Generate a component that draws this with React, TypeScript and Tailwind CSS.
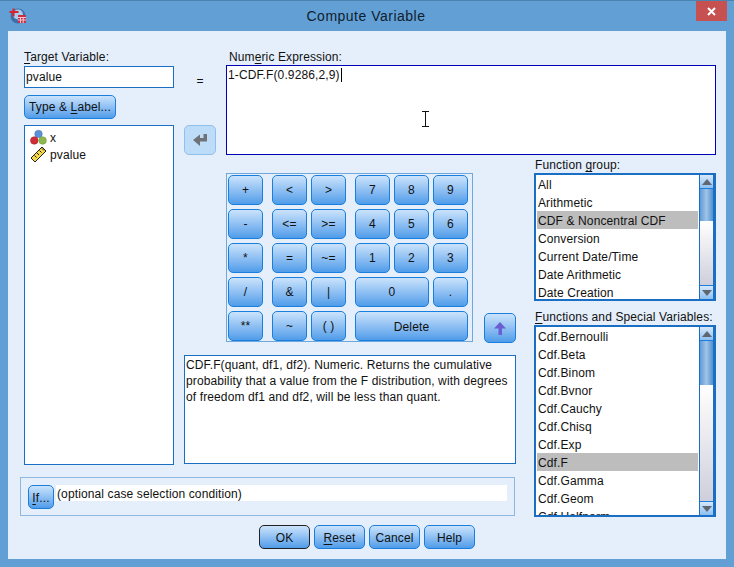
import React from "react";

const btn =
  "flex items-center justify-center rounded-[5px] border border-[#1a7fdc] bg-gradient-to-b from-[#cbe3fb] to-[#4f9ce9] text-[12px] text-[#111]";

function U({ children }: { children: React.ReactNode }) {
  return <span className="underline underline-offset-2">{children}</span>;
}

function Logo() {
  return (
    <svg width="18" height="18" viewBox="0 0 18 18" className="shrink-0">
      <circle cx="9" cy="9" r="7.5" fill="#3f6fa8" />
      <circle cx="9" cy="7.5" r="5" fill="#a9cdea" />
      <path d="M0.5 5h9M4.5 1.5v8" stroke="#d8232f" strokeWidth="2" fill="none" />
      <rect x="9" y="8" width="8" height="8" fill="#c8304a" />
      <path d="M9 10.5h8M9 13h8M11.5 10.5V16M14.2 10.5V16" stroke="#f5c8d0" strokeWidth="1" fill="none" />
    </svg>
  );
}

function NominalIcon() {
  return (
    <svg width="17" height="17" viewBox="0 0 17 17" className="shrink-0">
      <circle cx="8.5" cy="5" r="3.8" fill="#5c8fd6" stroke="#4a78b8" strokeWidth="0.5" />
      <circle cx="4.3" cy="11.5" r="3.8" fill="#d02c38" stroke="#a01c28" strokeWidth="0.5" />
      <circle cx="12.6" cy="11.5" r="3.8" fill="#8cb84c" stroke="#6c9438" strokeWidth="0.5" />
    </svg>
  );
}

function RulerIcon() {
  return (
    <svg width="17" height="17" viewBox="0 0 17 17" className="shrink-0">
      <path d="M1 12 L12 1 L16 5 L5 16 Z" fill="#f4d84a" stroke="#222" strokeWidth="1" />
      <path d="M4.5 9.5l2 2M7 7l2 2M9.5 4.5l2 2M12 2.5l2 2" stroke="#222" strokeWidth="1" fill="none" />
    </svg>
  );
}

function ListRow({ label, selected }: { label: string; selected?: boolean }) {
  return (
    <div className={`h-[18px] shrink-0 pl-[1px] leading-[20px] whitespace-nowrap ${selected ? "bg-[#bdbdbd]" : ""}`}>
      {label}
    </div>
  );
}

function Triangle({ up }: { up?: boolean }) {
  return (
    <svg width="10" height="6" viewBox="0 0 10 6">
      <path d={up ? "M0 6 L5 0 L10 6 Z" : "M0 0 L10 0 L5 6 Z"} fill="#5f6670" />
    </svg>
  );
}

function ScrollBar({ thumb }: { thumb: number }) {
  return (
    <div className="flex w-[15px] shrink-0 flex-col border-x border-[#1a6fc4]">
      <div className="flex h-[14px] shrink-0 items-center justify-center border-b border-[#1a7fdc] bg-gradient-to-b from-[#d6e8fb] to-[#8cc0f2]">
        <Triangle up />
      </div>
      <div
        className="shrink-0 bg-gradient-to-r from-[#5f9bd6] via-[#9fc4e6] to-[#4f8fd0]"
        style={{ height: thumb }}
      />
      <div className="flex-1 bg-gradient-to-b from-[#ffffff] to-[#cfcfdc]" />
      <div className="flex h-[14px] shrink-0 items-center justify-center border-t border-[#1a7fdc] bg-gradient-to-b from-[#d6e8fb] to-[#8cc0f2]">
        <Triangle />
      </div>
    </div>
  );
}

function ListBox({ items, selected, height, thumb }: { items: string[]; selected: string; height: string; thumb: number }) {
  return (
    <div className={`flex justify-between overflow-hidden border-2 border-[#1a6fc4] bg-white pl-[1px] ${height}`}>
      <div className="flex w-[161px] flex-col overflow-hidden">
        {items.map((i) => (
          <ListRow key={i} label={i} selected={i === selected} />
        ))}
      </div>
      <ScrollBar thumb={thumb} />
    </div>
  );
}

const keys: { label: string; cls: string }[] = [
  { label: "+", cls: "col-start-1" },
  { label: "<", cls: "col-start-3" },
  { label: ">", cls: "col-start-5" },
  { label: "7", cls: "col-start-7" },
  { label: "8", cls: "col-start-9" },
  { label: "9", cls: "col-start-11" },
  { label: "-", cls: "col-start-1" },
  { label: "<=", cls: "col-start-3" },
  { label: ">=", cls: "col-start-5" },
  { label: "4", cls: "col-start-7" },
  { label: "5", cls: "col-start-9" },
  { label: "6", cls: "col-start-11" },
  { label: "*", cls: "col-start-1" },
  { label: "=", cls: "col-start-3" },
  { label: "~=", cls: "col-start-5" },
  { label: "1", cls: "col-start-7" },
  { label: "2", cls: "col-start-9" },
  { label: "3", cls: "col-start-11" },
  { label: "/", cls: "col-start-1" },
  { label: "&", cls: "col-start-3" },
  { label: "|", cls: "col-start-5" },
  { label: "0", cls: "col-start-7 col-span-3" },
  { label: ".", cls: "col-start-11" },
  { label: "**", cls: "col-start-1" },
  { label: "~", cls: "col-start-3" },
  { label: "( )", cls: "col-start-5" },
  { label: "Delete", cls: "col-start-7 col-span-5 pt-[1px]" },
];

const groups = ["All", "Arithmetic", "CDF & Noncentral CDF", "Conversion", "Current Date/Time", "Date Arithmetic", "Date Creation"];
const funcs = ["Cdf.Bernoulli", "Cdf.Beta", "Cdf.Binom", "Cdf.Bvnor", "Cdf.Cauchy", "Cdf.Chisq", "Cdf.Exp", "Cdf.F", "Cdf.Gamma", "Cdf.Geom", "Cdf.Halfnorm"];

export default function App() {
  return (
    <div className="flex h-[567px] w-[734px] flex-col overflow-hidden border-t border-[#4a83ad] bg-[#619fd4] font-['Liberation_Sans',Arial,sans-serif] text-[12px] text-[#111]">
      {/* title bar */}
      <div className="relative flex h-[30px] shrink-0 items-center pl-[9px]">
        <Logo />
        <div className="flex-1 pr-[29px] text-center text-[14px] tracking-[0.5px] text-[#10202e]">Compute Variable</div>
        <div className="absolute right-[7px] top-0 flex h-[20px] w-[31px] items-center justify-center bg-[#c75050]">
          <svg width="9" height="9" viewBox="0 0 9 9">
            <path d="M1 1l7 7M8 1l-7 7" stroke="#fff" strokeWidth="2" />
          </svg>
        </div>
      </div>

      {/* body */}
      <div className="mx-2 flex h-[528px] flex-col bg-[#e4effb] pl-3 pt-[19px] tracking-[0.12px]">
        <div className="grid grid-cols-[4px_150px_10px_32px_10px_290px_18px_182px] grid-rows-[75px_30px_310px_12px_40px]">
          {/* target */}
          <div className="col-start-2 row-start-1 flex flex-col">
            <div className="h-[16px] leading-[14px]">
              <U>T</U>arget Variable:
            </div>
            <div className="flex h-[22px] items-center border border-[#1a6fc4] bg-white pl-[1px]">pvalue</div>
            <div className={`${btn} mt-[7px] h-[24px] w-[92px]`}>
              Type &amp;&nbsp;<U>L</U>abel...
            </div>
          </div>

          <div className="col-start-4 row-start-1 mt-[22px] text-center leading-[18px]">=</div>

          {/* expression */}
          <div className="col-start-6 col-end-9 row-start-1 row-end-3 flex flex-col">
            <div className="h-[15px] pl-[3px] leading-[14px]">
              Num<U>e</U>ric Expression:
            </div>
            <div className="relative h-[90px] border border-[#0000b4] bg-white pl-[1px] leading-[18px]">
              <span className="border-r border-black pr-[1px]">1-CDF.F(0.9286,2,9)</span>
              <svg width="9" height="17" viewBox="0 0 9 17" className="absolute left-[194px] top-[45px]">
                <path d="M1 .5h7M1 15.5h7M4.5 .5v15" stroke="#111" strokeWidth="1" fill="none" />
              </svg>
            </div>
          </div>

          {/* variables */}
          <div className="col-start-2 row-start-2 row-end-4 border border-[#1a6fc4] bg-white pl-[5px] pt-[3px]">
            <div className="flex h-[17px] items-center gap-[1px]">
              <NominalIcon />
              <span className="pl-[2px]">x</span>
            </div>
            <div className="flex h-[17px] items-center gap-[1px]">
              <RulerIcon />
              <span className="pl-[2px]">pvalue</span>
            </div>
          </div>

          <div className="col-start-4 row-start-2 flex items-center justify-center rounded-[5px] border border-[#8fc0ee] bg-[#bddcf8]">
            <svg width="16" height="14" viewBox="0 0 16 14">
              <path d="M15 1v7.5H8V13L1 7l7-5.5V5h3.5V1z" fill="#6f7378" />
            </svg>
          </div>

          {/* keypad + description */}
          <div className="col-start-4 col-end-7 row-start-3 flex flex-col">
            <div className="mt-[18px] flex items-end justify-between">
              <div className="ml-[42px] grid grid-cols-[35px_9px_35px_4px_35px_9px_35px_4px_35px_4px_35px] gap-y-[4px] border border-[#6ea8dc] pl-[1px] pr-[4px] pt-[1px]">
                {keys.map((k) => (
                  <div key={k.label} className={`${btn} h-[30px] ${k.cls}`}>
                    {k.label}
                  </div>
                ))}
              </div>
              <div className={`${btn} h-[30px] w-[32px] translate-y-[1px]`}>
                <svg width="12" height="13" viewBox="0 0 12 13">
                  <path d="M6 0l6 6.5H8V13H4.5V6.5H0z" fill="#6a5fd0" />
                </svg>
              </div>
            </div>
            <div className="mt-[13px] h-[109px] border border-[#1a6fc4] bg-white px-[1px] pt-[1px] leading-[16px]">
              CDF.F(quant, df1, df2). Numeric. Returns the cumulative probability that a value from the F distribution, with degrees of freedom df1 and df2, will be less than quant.
            </div>
          </div>

          {/* right column */}
          <div className="col-start-8 row-start-3 row-end-6 flex flex-col">
            <div className="h-[18px] pl-[1px] pt-[3px] leading-[14px]">
              Function <U>g</U>roup:
            </div>
            <ListBox items={groups} selected="CDF & Noncentral CDF" height="h-[128px]" thumb={32} />
            <div className="h-[24px] pl-[1px] pt-[9px] leading-[14px] whitespace-nowrap">
              <U>F</U>unctions and Special Variables:
            </div>
            <ListBox items={funcs} selected="Cdf.F" height="h-[192px]" thumb={44} />
          </div>

          {/* if row */}
          <div className="col-start-1 col-end-7 row-start-5 mr-[1px] mb-[1px] flex items-start gap-[2px] border border-[#8fb8e0] px-[7px] pt-[7px]">
            <div className={`${btn} h-[24px] w-[26px] shrink-0 pt-[2px]`}>
              <U>I</U>f...
            </div>
            <div className="h-[16px] flex-1 bg-white pl-[1px] leading-[18px]">(optional case selection condition)</div>
          </div>
        </div>

        {/* footer */}
        <div className="mt-[8px] flex justify-center gap-[4px] pr-3">
          <div className={`${btn} h-[24px] w-[51px] !border-[#222] pt-[1px]`}>OK</div>
          <div className={`${btn} h-[24px] w-[51px] pt-[1px]`}>
            <U>R</U>eset
          </div>
          <div className={`${btn} h-[24px] w-[51px] pt-[1px]`}>Cancel</div>
          <div className={`${btn} h-[24px] w-[51px] pt-[1px]`}>Help</div>
        </div>
      </div>
    </div>
  );
}
